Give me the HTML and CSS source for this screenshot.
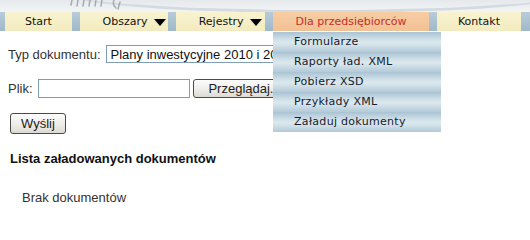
FILE: index.html
```html
<!DOCTYPE html>
<html lang="pl">
<head>
<meta charset="utf-8">
<title>Załaduj dokumenty</title>
<link rel="stylesheet" href="styles.css">
</head>
<body>
<div class="topstrip">
  <div class="swoosh"></div>
  <svg class="logo-bits" width="80" height="12" viewBox="0 0 80 12" aria-hidden="true">
    <g stroke="#a3abb1" stroke-width="1.5" fill="none" stroke-linecap="round">
      <path d="M4 0 L3 5"/><path d="M10 0 L9 6"/><path d="M16 0 L15 6"/>
      <path d="M22 0 L21 6"/><path d="M28 0 L27 6"/><path d="M34 0 L33 6"/>
      <path d="M46 0 Q44 5 48 8"/><path d="M52 2 L50 9"/>
    </g>
  </svg>
</div>
<nav class="menubar">
  <div class="tab tab-start">Start</div>
  <div class="tab tab-obszary">Obszary <span class="arrow"></span></div>
  <div class="tab tab-rejestry">Rejestry <span class="arrow"></span></div>
  <div class="tab tab-dla active">Dla przedsiębiorców
    <ul class="dropdown">
      <li>Formularze</li>
      <li>Raporty ład. XML</li>
      <li>Pobierz XSD</li>
      <li>Przykłady XML</li>
      <li>Załaduj dokumenty</li>
    </ul>
  </div>
  <div class="tab tab-kontakt">Kontakt</div>
</nav>
<main class="content">
  <div class="row row-typ">
    <span class="label">Typ dokumentu:</span>
    <div class="select">Plany inwestycyjne 2010 i 2011</div>
  </div>
  <div class="row row-plik">
    <span class="label">Plik:</span>
    <div class="fileinput"></div>
    <div class="btn btn-browse">Przeglądaj...</div>
  </div>
  <div class="row row-send">
    <div class="btn btn-send">Wyślij</div>
  </div>
  <h3 class="heading">Lista załadowanych dokumentów</h3>
  <p class="empty">Brak dokumentów</p>
</main>
</body>
</html>
```

FILE: styles.css
```css
html, body {
  margin: 0;
  padding: 0;
  background: #ffffff;
  width: 530px;
  height: 203px;
  overflow: hidden;
}
body {
  font-family: "Liberation Sans", Arial, sans-serif;
  font-size: 13px;
  color: #222;
}
.topstrip {
  height: 12px;
  background: linear-gradient(#e6e9ec, #f2f4f5);
  position: relative;
  overflow: hidden;
}
.swoosh {
  position: absolute;
  left: 60px;
  top: -30px;
  width: 520px;
  height: 40px;
  border-radius: 50%;
  border-bottom: 3px solid #d4dadf;
}
.logo-bits {
  position: absolute;
  left: 68px;
  top: 0;
}
.menubar {
  display: flex;
  gap: 8px;
  height: 19px;
  padding-left: 5px;
  background: linear-gradient(#b9cbd8, #9fb9cb);
  font-family: "DejaVu Sans", Verdana, sans-serif;
  font-size: 11px;
  position: relative;
}
.tab {
  height: 19px;
  line-height: 19px;
  background: linear-gradient(#f8f3d0, #f3ebbf);
  color: #111;
  text-align: center;
  position: relative;
  box-sizing: border-box;
  white-space: nowrap;
}
.tab-start { width: 67px; }
.tab-obszary { width: 88px; text-align: right; padding-right: 2px; }
.tab-rejestry { width: 89px; text-align: right; padding-right: 3px; }
.tab-dla { width: 156px; }
.tab-kontakt { width: 84px; }
.tab.active {
  background: linear-gradient(#f7cda4, #f1c194);
  color: #c2302a;
}
.arrow {
  display: inline-block;
  width: 0;
  height: 0;
  border-left: 6px solid transparent;
  border-right: 6px solid transparent;
  border-top: 7px solid #000;
  margin-left: 3px;
  vertical-align: -1px;
}
.dropdown {
  position: absolute;
  left: 0;
  top: 20px;
  width: 168px;
  margin: 0;
  padding: 0;
  list-style: none;
  z-index: 5;
  text-align: left;
}
.dropdown li {
  height: 20px;
  line-height: 20px;
  padding-left: 21px;
  letter-spacing: 0.3px;
  color: #14202c;
  background: linear-gradient(#a9c3d3 0%, #d3e2ea 40%, #dce8ee 55%, #b3cad8 100%);
}
.content {
  padding: 14px 0 0 8px;
}
.row {
  display: flex;
  align-items: center;
}
.label {
  color: #333;
}
.row-typ {
  height: 18px;
}
.select {
  margin-left: 5px;
  height: 18px;
  line-height: 17px;
  width: 230px;
  border: 1px solid #7f9db9;
  box-sizing: border-box;
  padding-left: 4px;
  white-space: nowrap;
  overflow: hidden;
  color: #111;
}
.row-plik {
  margin-top: 16px;
  height: 19px;
}
.fileinput {
  margin-left: 5px;
  width: 152px;
  height: 19px;
  border: 1px solid #7f9db9;
  box-sizing: border-box;
}
.btn {
  box-sizing: border-box;
  border: 1px solid #4a4a4a;
  border-radius: 3px;
  background: linear-gradient(#fdfdfd, #ecebe6 60%, #dcdad2);
  color: #222;
  text-align: center;
  white-space: nowrap;
}
.btn-browse {
  margin-left: 3px;
  width: 104px;
  height: 19px;
  line-height: 17px;
}
.row-send {
  margin-top: 15px;
  height: 21px;
  padding-left: 2px;
}
.btn-send {
  width: 56px;
  height: 21px;
  line-height: 19px;
}
.heading {
  margin: 17px 0 0 2px;
  font-size: 13px;
  font-weight: bold;
  color: #111;
  line-height: 16px;
}
.empty {
  margin: 23px 0 0 14px;
  line-height: 16px;
  color: #333;
}
```
